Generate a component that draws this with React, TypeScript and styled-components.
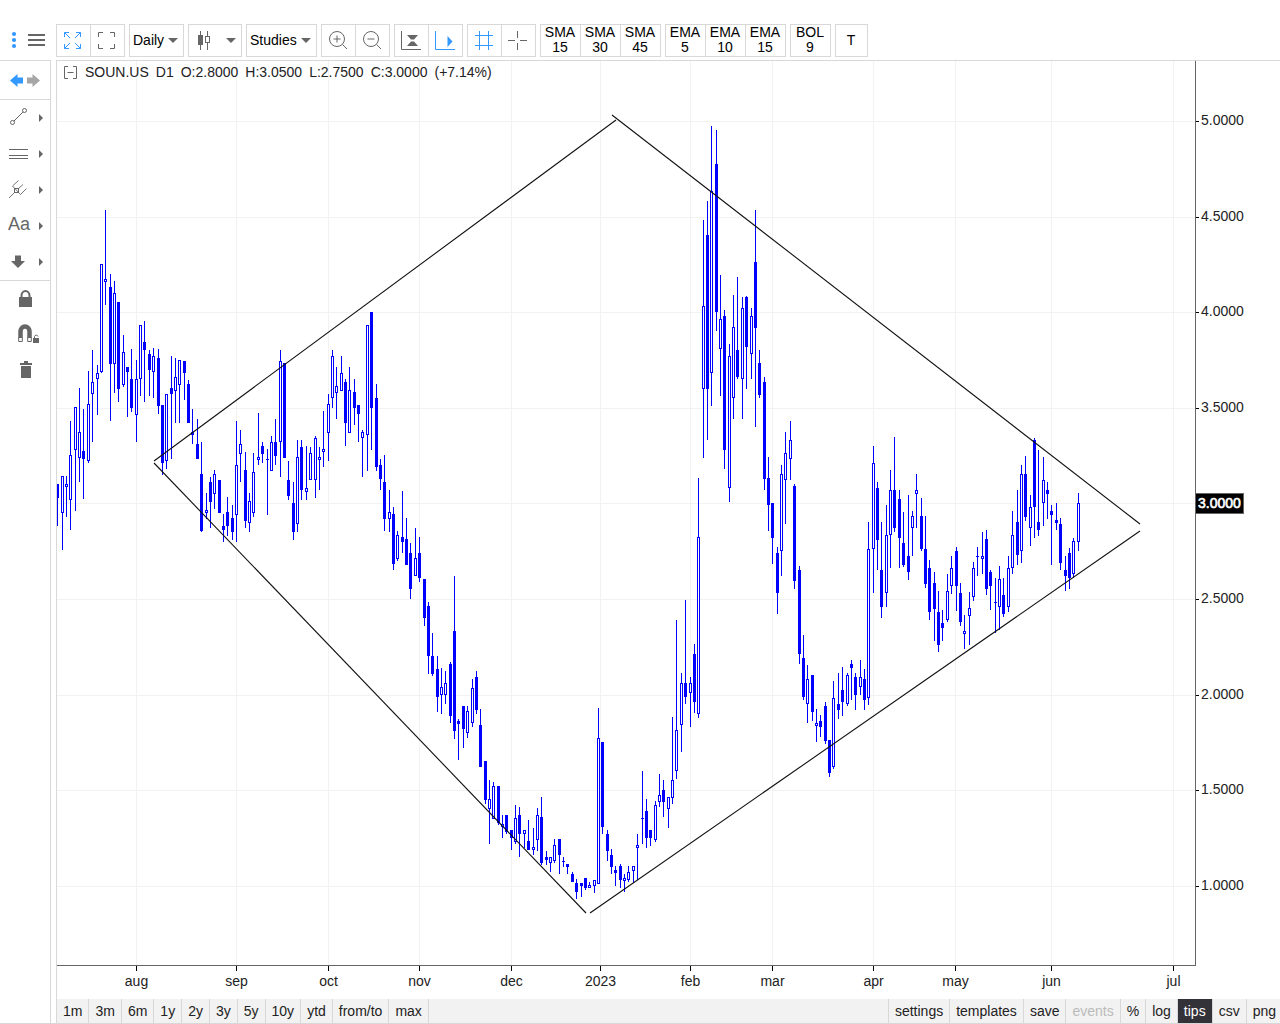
import React from "react";
import styled, { createGlobalStyle, css } from "styled-components";

const LINE = "#d8d8d8";
const INK = "#666666";
const BLUE = "#3399ff";
const FONT = '"Liberation Sans", Arial, Helvetica, sans-serif';

const GlobalStyle = createGlobalStyle`
  *, *::before, *::after { box-sizing: border-box; }
  body { margin: 0; background: #fff; }
  button, select { font: inherit; color: inherit; margin: 0; cursor: pointer; }
`;

const Page = styled.div`
  display: flex;
  flex-direction: column;
  min-height: 100vh;
  overflow: hidden;
  background: #fff;
  color: #000;
  font: 14px/15px ${FONT};
`;

/* ---------- top toolbar ---------- */

const TopBar = styled.header`
  display: flex;
  height: 60px;
  padding-top: 24px;
`;

const MenuArea = styled.div`
  display: flex;
  align-items: center;
  gap: 8px;
  flex: none;
  width: 56px;
  height: 32px;
  padding-left: 8px;
`;

const PlainButton = styled.button`
  display: flex;
  padding: 0;
  border: 0;
  background: none;
`;

const Groups = styled.div`
  display: flex;
  gap: 4px;
`;

const Group = styled.div`
  display: flex;
  height: 33px;
  border: 1px solid ${LINE};
`;

const ToolButton = styled.button<{ $width?: number }>`
  display: flex;
  align-items: center;
  justify-content: center;
  flex: none;
  width: ${(p) => p.$width ?? 34}px;
  padding: 0 1px 1px 0;
  border: 0;
  background: #fff;
  line-height: 15px;
  white-space: pre-line;

  & + & {
    border-left: 1px solid ${LINE};
  }
  &:first-child {
    width: ${(p) => (p.$width ?? 34) - 1}px;
  }
`;

const SelectBox = styled.label<{ $width: number }>`
  position: relative;
  display: flex;
  align-items: center;
  width: ${(p) => p.$width}px;
  height: 33px;
  border: 1px solid ${LINE};
`;

const Select = styled.select`
  appearance: none;
  width: 100%;
  height: 100%;
  padding: 0 0 0 3px;
  border: 0;
  background: none;
`;

const SelectCaret = styled.span`
  position: absolute;
  right: 5px;
  display: flex;
  pointer-events: none;
`;

const StyleButton = styled.button`
  display: flex;
  align-items: center;
  justify-content: space-between;
  width: 54px;
  height: 33px;
  padding: 0 5px 1px 8px;
  border: 1px solid ${LINE};
  background: #fff;
`;

/* ---------- left toolbar ---------- */

const Body = styled.div`
  display: flex;
  flex: 1;
  border-bottom: 1px solid ${LINE};
`;

const SideBar = styled.aside`
  flex: none;
  width: 51px;
  margin-right: 5px;
  border: solid ${LINE};
  border-width: 1px 1px 0 0;
`;

const SideSection = styled.div`
  display: flex;
  flex-direction: column;
  & + & {
    border-top: 1px solid ${LINE};
  }
`;

const History = styled.div`
  display: flex;
  gap: 4px;
  height: 38px;
  align-items: center;
  padding-left: 10px;
`;

const DrawTool = styled.button`
  display: flex;
  align-items: center;
  justify-content: space-between;
  height: 36px;
  padding: 0 7px 0 8px;
  border: 0;
  background: none;
`;

const LetterIcon = styled.span`
  padding-bottom: 4px;
  color: ${INK};
  font-size: 18px;
  line-height: 20px;
`;

const SideAction = styled.button`
  display: flex;
  align-items: center;
  height: 35px;
  padding: 0 0 0 17px;
  border: 0;
  background: none;
`;

/* ---------- chart ---------- */

const ChartColumn = styled.main`
  display: flex;
  flex-direction: column;
  flex: 1;
  min-width: 0;
  border: solid ${LINE};
  border-width: 1px 0 0 1px;
`;

const Plot = styled.section`
  position: relative;
  flex: 1;
`;

const ChartSvg = styled.svg`
  display: block;
  width: 100%;
  height: auto;
`;

const Legend = styled.div`
  position: absolute;
  top: 4px;
  left: 7px;
  display: flex;
  align-items: center;
  gap: 8px;
  height: 15px;
  color: #222;
`;

const LegendValues = styled.div`
  display: flex;
  gap: 7px;
`;

const AxisText = styled.text`
  fill: #222;
  font: 14px ${FONT};
`;

const LastPriceText = styled.text`
  fill: #fff;
  stroke: #fff;
  stroke-width: 0.6px;
  font: 14px ${FONT};
`;

const RangeBar = styled.footer`
  display: flex;
  justify-content: space-between;
  height: 24px;
  background: #f2f2f2;
`;

const RangeGroup = styled.nav<{ $end?: boolean }>`
  display: flex;
  ${(p) =>
    p.$end &&
    css`
      margin-right: -3px;
      border-left: 1px solid ${LINE};
    `}
`;

const RangeButton = styled.button<{ $active?: boolean }>`
  padding: 0 6px;
  border: 0;
  border-right: 1px solid ${LINE};
  background: ${(p) => (p.$active ? "#333238" : "none")};
  color: ${(p) => (p.$active ? "#fff" : "#222")};
  line-height: 24px;

  &:disabled {
    color: #bbb;
    cursor: default;
  }
`;

/* ---------- icons ---------- */

const Caret = () => (
  <svg width="10" height="5" viewBox="0 0 10 5" aria-hidden="true">
    <path d="M0 0H10L5 5Z" fill={INK} />
  </svg>
);

const Flyout = () => (
  <svg width="4" height="8" viewBox="0 0 4 8" aria-hidden="true">
    <path d="M0 0L4 4L0 8Z" fill={INK} />
  </svg>
);

const Icon = ({ size = 20, width, children }: { size?: number; width?: number; children: React.ReactNode }) => (
  <svg
    width={width ?? size}
    height={size}
    viewBox={`0 0 ${width ?? size} ${size}`}
    fill="none"
    stroke={INK}
    aria-hidden="true"
  >
    {children}
  </svg>
);

const icons = {
  dots: (
    <Icon width={12}>
      <g fill={BLUE} stroke="none">
        <circle cx="6" cy="4" r="2.1" />
        <circle cx="6" cy="10" r="2.1" />
        <circle cx="6" cy="16" r="2.1" />
      </g>
    </Icon>
  ),
  menu: (
    <Icon width={17}>
      <path d="M0 5H17M0 10H17M0 15H17" strokeWidth="2" />
    </Icon>
  ),
  expand: (
    <Icon>
      <path
        stroke={BLUE}
        d="M1.5 7V2.5H6M1.5 2.5L7 8M13 2.5H17.5V7M17.5 2.5L12 8M1.5 14V18.5H6M1.5 18.5L7 13M13 18.5H17.5V14M17.5 18.5L12 13"
      />
    </Icon>
  ),
  frame: (
    <Icon>
      <path d="M1.5 7V2.5H6M13 2.5H17.5V7M1.5 14V18.5H6M13 18.5H17.5V14" />
    </Icon>
  ),
  candles: (
    <Icon width={16}>
      <path d="M3.5 1V20M10.5 1V6M10.5 13V20" />
      <rect x="1" y="5" width="5" height="10" fill={INK} stroke="none" />
      <rect x="8.5" y="6.5" width="4" height="6" />
    </Icon>
  ),
  zoomIn: (
    <Icon>
      <circle cx="9" cy="9" r="7.5" />
      <path d="M14.500 14.500L19 19M5.500 9H12.500M9 5.500V12.500" />
    </Icon>
  ),
  zoomOut: (
    <Icon>
      <circle cx="9" cy="9" r="7.5" />
      <path d="M14.500 14.500L19 19M5.500 9H12.500" />
    </Icon>
  ),
  autoScale: (
    <Icon>
      <path d="M0.5 1V19.5H20" />
      <path d="M6 5H17L13 9.500H10ZM6 16H17L13 11.500H10Z" fill={INK} stroke="none" />
    </Icon>
  ),
  shift: (
    <Icon>
      <path d="M0.5 1V19.5H20" stroke={BLUE} />
      <path d="M12.5 6L17.5 11.5L12.5 17Z" fill={BLUE} stroke="none" />
    </Icon>
  ),
  grid: (
    <Icon>
      <path d="M5.5 1V20M14.5 1V20M1 5.5H19M1 15.5H19" stroke={BLUE} />
    </Icon>
  ),
  cross: (
    <Icon>
      <path d="M0 10.5H7M12 10.5H19M9.5 1V8M9.5 13V20" />
    </Icon>
  ),
  back: (
    <Icon size={13}>
      <path d="M0 6.5L7.500 0V3.500H13V9.500H7.500V13Z" fill={BLUE} stroke="none" />
    </Icon>
  ),
  forward: (
    <Icon size={13}>
      <path d="M13 6.5L5.500 0V3.500H0V9.500H5.500V13Z" fill="#a6a6a6" stroke="none" />
    </Icon>
  ),
  trend: (
    <Icon>
      <circle cx="16.5" cy="2.5" r="2" />
      <circle cx="4.5" cy="14.5" r="2" />
      <path d="M6 13L15 4" />
    </Icon>
  ),
  levels: (
    <Icon>
      <path d="M1 5.5H20M1 11.5H20M1 14.5H20" />
    </Icon>
  ),
  fork: (
    <Icon>
      <rect x="6.5" y="8.500" width="4" height="4" />
      <path d="M1 18L6.500 12.500M4.500 6L10.500 0.500M4.500 6L12.500 14.500M10.500 8.500L15 4.500M12.500 14.500L18.500 8.500" strokeWidth="0.9" />
    </Icon>
  ),
  down: (
    <Icon>
      <path d="M7 3.500H13V9H17L10 16L3 9H7Z" fill={INK} stroke="none" />
    </Icon>
  ),
  lock: (
    <Icon>
      <path d="M4.500 10V6.500A4 4.500 0 0 1 12.500 6.500V10" strokeWidth="2" />
      <rect x="2" y="8" width="13" height="10" fill={INK} stroke="none" />
    </Icon>
  ),
  magnet: (
    <Icon width={24}>
      <path d="M3.500 14V7.500A4.500 5 0 0 1 12.500 7.500V14" strokeWidth="4.5" />
      <path d="M1.700 13.500V17.500H5.300V13.500M10.700 13.500V17.500H14.300V13.500" />
      <rect x="16" y="14" width="6" height="5" fill={INK} stroke="none" />
      <path d="M17.500 14V12.500A1.800 1.800 0 0 1 21 12.500" />
    </Icon>
  ),
  trash: (
    <Icon>
      <path d="M3 4H7V2H11V4H15V6H3ZM4 7H14V19H4Z" fill={INK} stroke="none" />
    </Icon>
  ),
  collapse: (
    <Icon size={13}>
      <path d="M4 0.5H0.5V12.5H4M9 0.5H12.5V12.5H9M3.500 6.5H9.500" />
    </Icon>
  ),
};

/* ---------- chart data ---------- */

const VIEW = { left: 57, top: 61, width: 1223, height: 938 };
const AXIS_X = 1195;
const AXIS_Y = 965;

const MONTHS: [string, number][] = [
  ["aug", 136], ["sep", 236], ["oct", 328], ["nov", 419], ["dec", 511], ["2023", 600],
  ["feb", 690], ["mar", 772], ["apr", 873], ["may", 955], ["jun", 1051], ["jul", 1173],
];

const PRICES: [string, number][] = [
  ["5.0000", 121], ["4.5000", 217], ["4.0000", 312], ["3.5000", 408], ["3.0000", 503],
  ["2.5000", 599], ["2.0000", 695], ["1.5000", 790], ["1.0000", 886],
];

const LAST = PRICES[4];

const TREND_LINES = [
  [154, 461, 616, 120],
  [612, 115, 1140, 524],
  [154, 463, 586, 913],
  [590, 913, 1140, 531],
];

/* One candle per entry: F (falling, filled) or H (rising, hollow), then the
   chart rows of the high, body top, body bottom and low. */
const SERIES = `
F 484 484 497 525|H 476 476 512 549|H 476 484 486 516|H 421 455 499 529|H 407 407 449 510
H 388 432 457 481|F 409 451 458 498|H 371 404 460 462|H 350 382 393 441|H 365 373 378 414
H 264 264 371 372|H 210 279 281 304|F 274 287 363 420|H 281 293 363 392|F 302 302 388 401
H 335 352 384 386|F 367 367 371 416|F 349 379 407 411|H 360 379 414 441|H 325 325 378 395
F 321 342 349 401|F 350 354 369 395|H 348 356 371 397|F 349 358 405 413|F 405 405 462 474
H 394 394 460 468|F 356 388 393 458|H 358 377 390 422|H 360 360 384 422|F 361 361 372 399
F 380 384 422 422|F 409 432 434 443|F 419 444 458 458|F 442 474 530 531|H 493 510 512 518
F 477 482 501 527|H 470 474 493 508|F 480 480 512 512|F 514 526 529 541|F 497 512 525 535
F 505 518 531 539|H 421 465 514 541|H 430 444 453 481|F 452 470 520 527|H 493 501 522 531
H 453 472 512 516|H 413 457 459 464|F 442 446 453 462|F 449 459 459 514|H 436 442 470 470
F 419 442 455 464|H 350 361 441 476|F 363 363 457 457|F 461 480 495 499|F 482 503 531 539
H 440 457 523 531|F 440 447 489 499|H 446 488 491 499|H 447 453 479 479|H 436 438 479 497
H 447 457 459 489|H 411 449 451 466|H 394 404 432 460|H 350 356 397 407|H 367 386 392 418
H 356 373 390 390|F 379 382 422 445|H 367 390 432 432|F 379 392 407 424|F 405 405 413 441
H 430 432 437 476|H 325 325 434 470|F 312 312 407 449|F 384 398 466 470|F 459 465 478 489
F 455 482 518 530|H 490 512 518 531|F 507 514 563 569|H 531 535 558 560|F 491 537 541 552
F 518 539 564 564|F 543 553 588 598|H 528 558 575 575|F 537 553 577 581|F 579 579 617 625
F 602 606 655 673|F 633 656 673 675|F 656 669 696 711|H 668 687 694 713|H 671 683 694 703
F 662 664 715 722|F 576 631 730 738|F 719 721 723 759|F 706 706 728 747|H 706 711 732 737
H 679 688 722 726|F 671 677 709 713|F 709 725 766 766|F 761 761 799 803|H 780 799 808 843
H 782 786 818 818|F 786 786 822 824|H 815 824 826 837|F 815 815 831 833|F 830 830 837 849
H 805 818 841 843|F 807 815 833 856|H 830 830 833 847|F 820 841 849 849|H 828 847 849 854
H 808 815 839 850|F 797 817 862 864|F 851 857 859 864|H 857 857 862 871|H 839 845 860 862
F 839 839 854 873|F 857 861 861 866|F 864 864 866 873|F 872 874 881 881|F 879 883 891 898
F 883 883 885 896|F 878 878 887 889|H 882 885 887 887|H 880 880 885 892|H 708 738 883 883
F 742 742 826 833|F 830 834 850 860|F 849 855 866 873|F 866 870 872 885|F 864 866 879 887
H 874 878 880 891|H 866 872 879 881|H 866 866 870 882|H 834 845 847 879|F 771 818 818 843
F 799 811 837 847|F 830 830 837 845|H 801 805 839 841|H 774 795 801 806|F 780 790 801 816
H 797 797 808 827|H 717 780 797 803|H 620 730 770 778|H 673 683 724 751|F 600 683 696 703
H 677 683 692 726|F 644 654 701 712|H 478 537 713 717|H 220 306 388 457|F 201 235 388 439
H 126 191 372 405|F 130 164 311 330|H 275 319 348 395|F 310 316 449 468|H 344 356 487 501
H 295 327 397 418|F 277 350 376 378|H 297 308 378 418|F 296 297 346 388|H 308 316 353 378
F 210 262 327 426|F 350 363 394 397|F 377 382 478 489|F 457 478 504 530|F 503 503 537 563
F 547 553 592 613|H 465 474 550 575|H 432 453 479 523|H 421 440 458 479|F 484 486 580 588
F 566 570 653 663|F 635 658 696 699|H 665 679 703 722|F 675 675 711 720|H 709 723 725 741
F 715 721 726 736|F 702 706 740 743|F 740 740 772 776|H 681 698 766 768|F 673 704 709 718
F 667 690 701 715|H 673 675 703 705|F 660 664 667 699|F 673 677 694 709|H 660 677 686 694
F 669 679 699 709|H 522 549 697 704|H 446 463 548 592|F 482 488 539 569|F 522 570 606 617
H 505 535 592 606|H 470 490 534 567|F 437 490 527 531|F 490 499 537 567|F 512 543 564 566
F 495 556 571 579|H 511 516 527 555|H 474 490 493 527|F 498 516 548 550|F 516 549 583 587
F 560 568 611 619|F 572 583 608 640|F 591 612 644 651|F 610 623 627 640|H 574 591 619 621
H 556 568 585 593|F 547 551 585 610|F 583 593 621 625|H 615 631 633 648|H 592 608 615 644
H 562 568 596 600|F 547 556 556 575|H 532 556 558 573|F 530 539 588 594|F 570 572 585 609
F 578 602 602 632|H 566 579 606 629|F 578 595 613 616|H 556 568 606 611|H 511 535 567 573
F 490 522 554 564|H 465 474 550 562|F 456 474 516 520|H 495 507 527 545|F 438 440 506 537
F 450 522 529 535|H 457 480 502 525|F 482 490 493 518|F 505 511 514 564|F 503 520 522 529
F 518 524 562 569|F 556 570 575 590|F 548 553 577 588|H 538 541 573 577|H 493 503 541 550
`;

const FIRST_X = 57.76;
const STEP = 4.3605;

const candles = SERIES.trim()
  .split(/[|\n]/)
  .map((entry, i) => {
    const [kind, ...rows] = entry.split(" ");
    const [high, top, bottom, low] = rows.map(Number);
    return { x: Math.floor(FIRST_X + STEP * i), rising: kind === "H", high, top, bottom, low };
  });

const Candles = () => (
  <g shapeRendering="crispEdges" stroke="#0000ff">
    {candles.map((c) => (
      <g key={c.x}>
        <path d={`M${c.x + 0.5} ${c.high}V${c.low + 1}`} />
        {c.bottom === c.top ? (
          <path d={`M${c.x - 1} ${c.top + 0.5}H${c.x + 2}`} />
        ) : (
          <rect
            x={c.x - 0.5}
            y={c.top + 0.5}
            width={2}
            height={c.bottom - c.top}
            fill={c.rising ? "#ffffff" : "#0000ff"}
          />
        )}
      </g>
    ))}
  </g>
);

const Chart = () => (
  <ChartSvg
    viewBox={`${VIEW.left} ${VIEW.top} ${VIEW.width} ${VIEW.height}`}
    role="img"
    aria-label="SOUN.US daily price chart"
  >
    <g stroke="#f2f2f2" shapeRendering="crispEdges">
      {MONTHS.map(([name, x]) => (
        <path key={name} d={`M${x + 0.5} ${VIEW.top}V${AXIS_Y}`} />
      ))}
      {PRICES.map(([name, y]) => (
        <path key={name} d={`M${VIEW.left} ${y + 0.5}H${AXIS_X}`} />
      ))}
    </g>
    <Candles />
    <g stroke="#111" strokeWidth="1.1">
      {TREND_LINES.map(([x1, y1, x2, y2]) => (
        <line key={`${x1}-${y1}`} x1={x1} y1={y1} x2={x2} y2={y2} />
      ))}
    </g>
    <path
      d={`M${VIEW.left} ${AXIS_Y + 0.5}H${AXIS_X + 0.5}V${VIEW.top}`}
      fill="none"
      stroke={INK}
      shapeRendering="crispEdges"
    />
    {MONTHS.map(([name, x]) => (
      <g key={name}>
        <path d={`M${x + 0.5} ${AXIS_Y + 1}v5`} stroke="#000" />
        <AxisText x={x + 0.5} y={986} textAnchor="middle">
          {name}
        </AxisText>
      </g>
    ))}
    {PRICES.filter((p) => p !== LAST).map(([name, y]) => (
      <g key={name}>
        <path d={`M${AXIS_X + 1} ${y + 0.5}h3`} stroke="#000" />
        <AxisText x={AXIS_X + 6} y={y + 4}>
          {name}
        </AxisText>
      </g>
    ))}
    <rect x={AXIS_X + 0.5} y={LAST[1] - 9.5} width={48} height={20} fill="#000" stroke={INK} />
    <LastPriceText x={AXIS_X + 3} y={LAST[1] + 5}>
      {LAST[0]}
    </LastPriceText>
  </ChartSvg>
);

/* ---------- page ---------- */

const LEGEND = ["SOUN.US", "D1", "O:2.8000", "H:3.0500", "L:2.7500", "C:3.0000", "(+7.14%)"];
const RANGES = ["1m", "3m", "6m", "1y", "2y", "3y", "5y", "10y", "ytd", "from/to", "max"];
const OPTIONS = ["settings", "templates", "save", "events", "%", "log", "tips", "csv", "png"];
const AVERAGES = [["SMA\n15", "SMA\n30", "SMA\n45"], ["EMA\n5", "EMA\n10", "EMA\n15"], ["BOL\n9"]];

const TOOL_PAIRS: [string, React.ReactNode][][] = [
  [["Zoom in", icons.zoomIn], ["Zoom out", icons.zoomOut]],
  [["Auto scale", icons.autoScale], ["Shift chart", icons.shift]],
  [["Grid", icons.grid], ["Crosshair", icons.cross]],
];

const DRAW_TOOLS: [string, React.ReactNode][] = [
  ["Trend line", icons.trend],
  ["Levels", icons.levels],
  ["Pitchfork", icons.fork],
  ["Text", <LetterIcon>Aa</LetterIcon>],
  ["Arrow", icons.down],
];

const ToolPair = ({ tools }: { tools: [string, React.ReactNode][] }) => (
  <Group>
    {tools.map(([name, icon]) => (
      <ToolButton key={name} aria-label={name}>
        {icon}
      </ToolButton>
    ))}
  </Group>
);

const Dropdown = ({ name, value, width }: { name: string; value: string; width: number }) => (
  <SelectBox $width={width}>
    <Select aria-label={name} defaultValue={value}>
      <option>{value}</option>
    </Select>
    <SelectCaret>
      <Caret />
    </SelectCaret>
  </SelectBox>
);

export default function App() {
  return (
    <Page>
      <GlobalStyle />
      <TopBar>
        <MenuArea>
          <PlainButton aria-label="More">{icons.dots}</PlainButton>
          <PlainButton aria-label="Menu">{icons.menu}</PlainButton>
        </MenuArea>
        <Groups>
          <ToolPair tools={[["Full screen", icons.expand], ["Fit", icons.frame]]} />
          <Dropdown name="Interval" value="Daily" width={55} />
          <StyleButton aria-label="Chart style">
            {icons.candles}
            <Caret />
          </StyleButton>
          <Dropdown name="Studies" value="Studies" width={71} />
          {TOOL_PAIRS.map((tools) => (
            <ToolPair key={tools[0][0]} tools={tools} />
          ))}
          {AVERAGES.map((names) => (
            <Group key={names[0]}>
              {names.map((name) => (
                <ToolButton key={name} $width={40}>
                  {name}
                </ToolButton>
              ))}
            </Group>
          ))}
          <Group>
            <ToolButton $width={32}>T</ToolButton>
          </Group>
        </Groups>
      </TopBar>
      <Body>
        <SideBar>
          <SideSection>
            <History>
              <PlainButton aria-label="Undo">{icons.back}</PlainButton>
              <PlainButton aria-label="Redo">{icons.forward}</PlainButton>
            </History>
          </SideSection>
          <SideSection>
            {DRAW_TOOLS.map(([name, icon]) => (
              <DrawTool key={name} aria-label={name}>
                {icon}
                <Flyout />
              </DrawTool>
            ))}
          </SideSection>
          <SideSection>
            <SideAction aria-label="Lock">{icons.lock}</SideAction>
            <SideAction aria-label="Magnet">{icons.magnet}</SideAction>
            <SideAction aria-label="Delete">{icons.trash}</SideAction>
          </SideSection>
        </SideBar>
        <ChartColumn>
          <Plot>
            <Chart />
            <Legend>
              <PlainButton aria-label="Collapse">{icons.collapse}</PlainButton>
              <LegendValues>
                {LEGEND.map((part) => (
                  <span key={part}>{part}</span>
                ))}
              </LegendValues>
            </Legend>
          </Plot>
          <RangeBar>
            <RangeGroup>
              {RANGES.map((name) => (
                <RangeButton key={name}>{name}</RangeButton>
              ))}
            </RangeGroup>
            <RangeGroup $end>
              {OPTIONS.map((name) => (
                <RangeButton key={name} $active={name === "tips"} disabled={name === "events"}>
                  {name}
                </RangeButton>
              ))}
            </RangeGroup>
          </RangeBar>
        </ChartColumn>
      </Body>
    </Page>
  );
}
